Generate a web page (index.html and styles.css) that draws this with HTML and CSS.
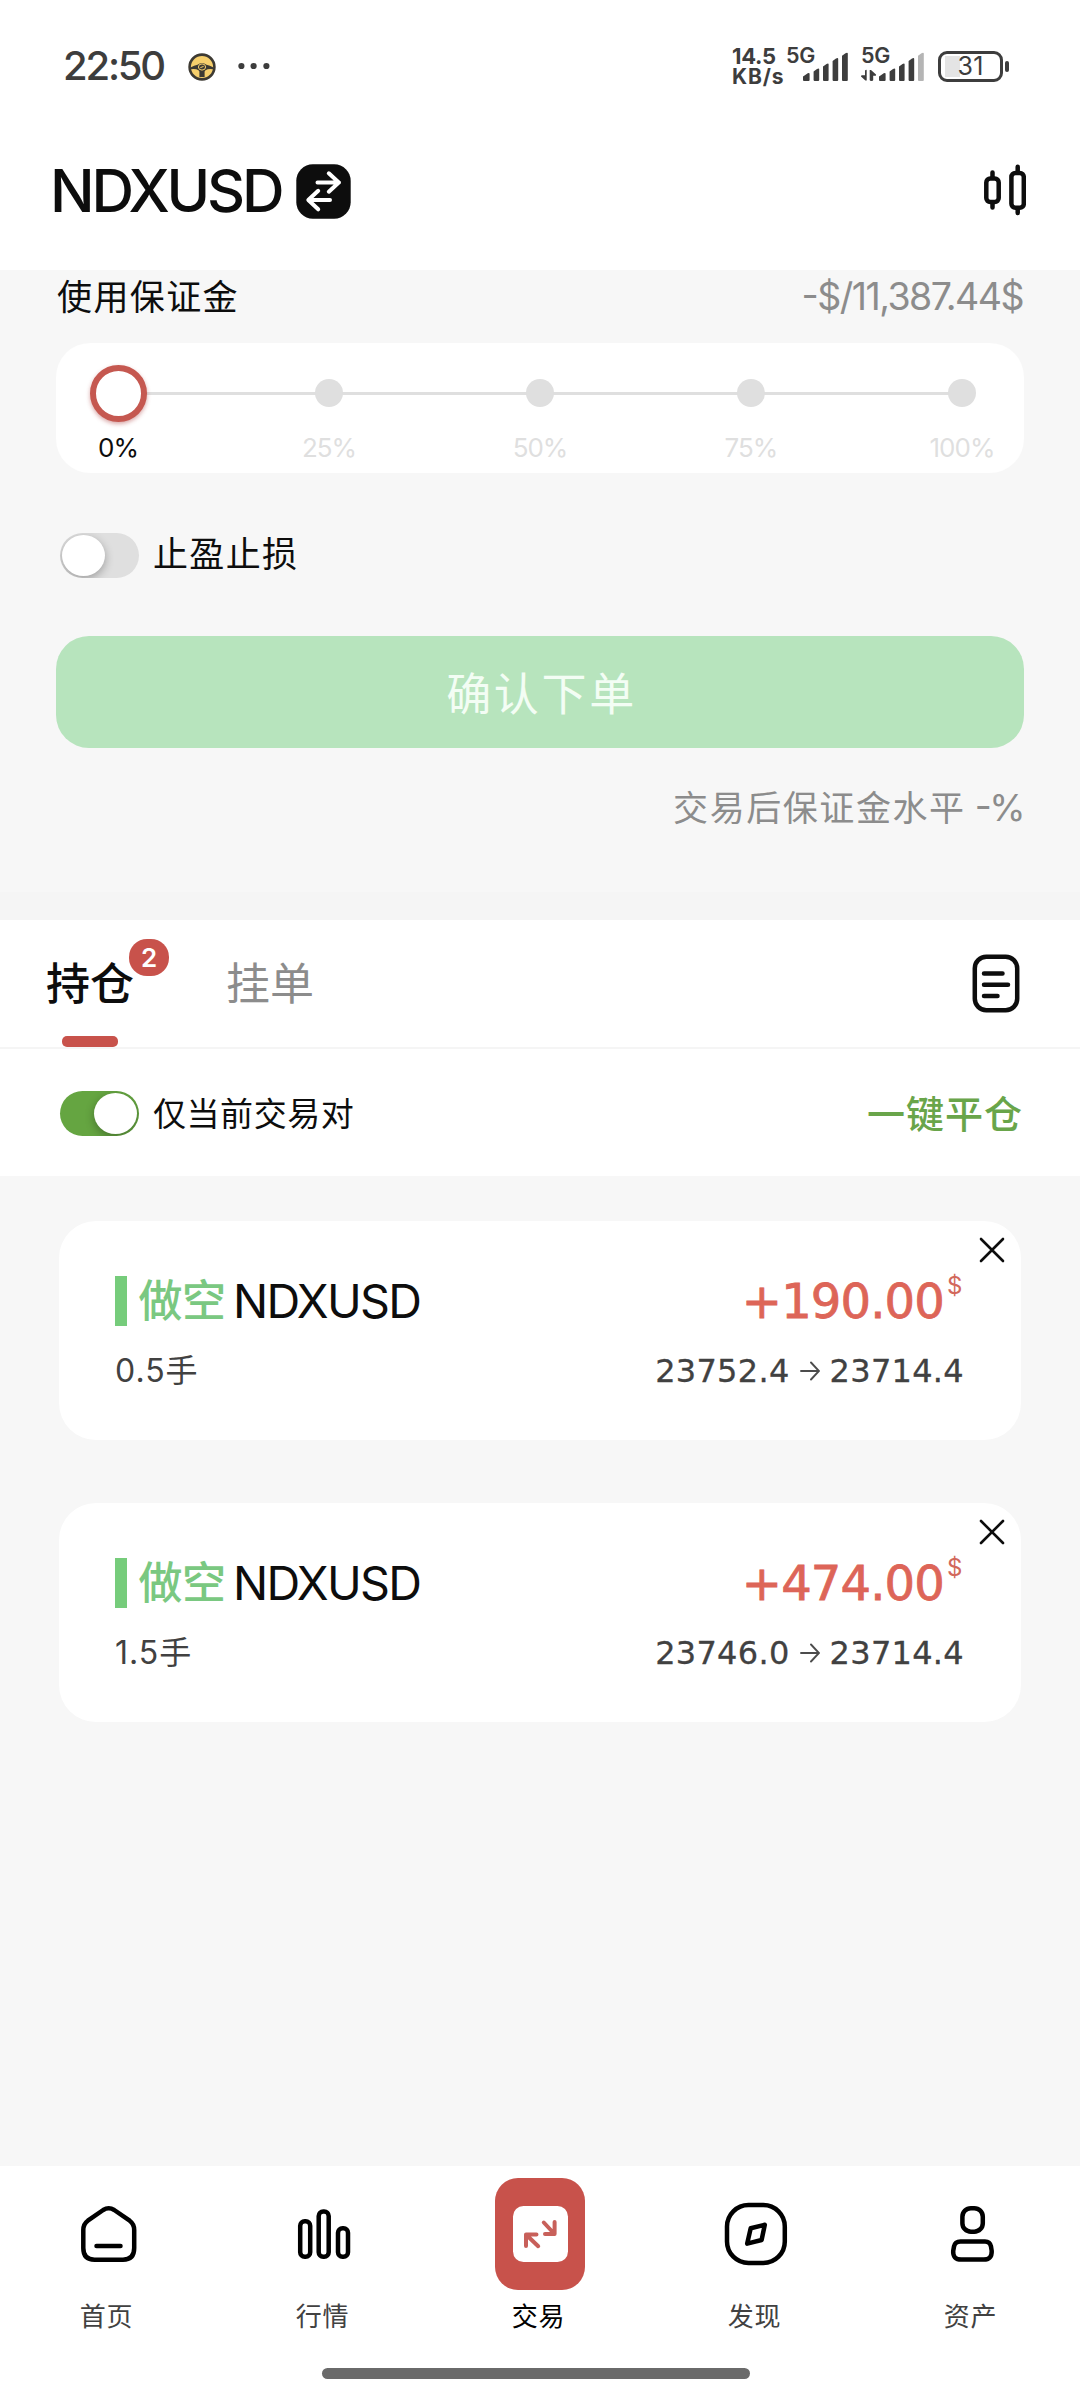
FILE: index.html
```
<!DOCTYPE html>
<html lang="zh-CN">
<head>
<meta charset="utf-8">
<title>NDXUSD 交易</title>
<link rel="stylesheet" href="styles.css">
</head>
<body>
<div class="screen">
  <div class="status">
    <span class="clock">22:50</span>
    <svg class="wheel" width="28" height="28" viewBox="0 0 28 28">
      <circle cx="14" cy="14" r="12.4" fill="#f6cf6c" stroke="#3d3a33" stroke-width="2.6"/>
      <path d="M3 14.2 Q6 12.6 9.5 11.8 Q14 8.2 18.5 11.8 Q22 12.6 25 14.2 V16.2 Q20 15.6 17.5 17.2 L16.6 18.5 V24 H11.4 V18.5 L10.5 17.2 Q8 15.6 3 16.2 Z" fill="#3d3a33"/>
      <ellipse cx="14" cy="14" rx="3.6" ry="3.1" fill="none" stroke="#f6cf6c" stroke-width="1"/>
      <path d="M12.4 14.6 L15.6 13.4" stroke="#f6cf6c" stroke-width="1"/>
    </svg>
    <svg class="dots" width="32" height="8" viewBox="0 0 32 8" fill="#3d3d3d"><circle cx="3.4" cy="4" r="3.1"/><circle cx="15.6" cy="4" r="3.1"/><circle cx="28.4" cy="4" r="3.1"/></svg>
    <div class="speed"><span class="speed-num">14.5</span><span class="speed-unit">KB/s</span></div>
    <div class="signal sim1">
      <span class="net">5G</span>
      <svg width="46" height="30" viewBox="0 0 46 30" fill="#3d3d3d">
        <path d="M0 29V25.5L3 23.5Q6.6 21 6.6 23V29Q6.6 30 5.6 30H1Q0 30 0 29Z"/>
        <path d="M10.6 29V20.5L14 18Q16.2 16.8 16.2 18.5V29Q16.2 30 15.2 30H11.6Q10.6 30 10.6 29Z"/>
        <path d="M20 29V15.5L23.5 13Q25.6 11.8 25.6 13.5V29Q25.6 30 24.6 30H21Q20 30 20 29Z"/>
        <path d="M29.6 29V10L33 7.5Q35.2 6.3 35.2 8V29Q35.2 30 34.2 30H30.6Q29.6 30 29.6 29Z"/>
        <path d="M39 29V4.8L42.5 2.3Q44.8 1.1 44.8 2.8V29Q44.8 30 43.8 30H40Q39 30 39 29Z"/>
      </svg>
    </div>
    <div class="signal sim2">
      <span class="net">5G</span>
      <svg width="64" height="30" viewBox="-18 0 64 30" fill="#3d3d3d">
        <path d="M-14 19.5Q-12.3 18-12.3 19.5V29.5H-13.6L-18 25.5Q-18.3 24.3-17 24.3H-14ZM-9.3 19H-8L-3 23.5Q-2.7 24.8-4 24.8H-5.8V29Q-5.8 30-7.5 30Q-9.3 30-9.3 29Z"/>
        <path d="M0 29V25.5L3 23.5Q6.6 21 6.6 23V29Q6.6 30 5.6 30H1Q0 30 0 29Z"/>
        <path d="M10.6 29V20.5L14 18Q16.2 16.8 16.2 18.5V29Q16.2 30 15.2 30H11.6Q10.6 30 10.6 29Z"/>
        <path d="M20 29V15.5L23.5 13Q25.6 11.8 25.6 13.5V29Q25.6 30 24.6 30H21Q20 30 20 29Z"/>
        <path d="M29.6 29V10L33 7.5Q35.2 6.3 35.2 8V29Q35.2 30 34.2 30H30.6Q29.6 30 29.6 29Z"/>
        <path fill="#b5b5b5" d="M39 29V4.8L42.5 2.3Q44.8 1.1 44.8 2.8V29Q44.8 30 43.8 30H40Q39 30 39 29Z"/>
      </svg>
    </div>
    <div class="battery"><span class="level">31</span></div>
    <span class="battery-cap"></span>
  </div>

  <header class="header">
    <h1 class="symbol">NDXUSD</h1>
    <svg class="swap" width="55" height="55" viewBox="0 0 55 55">
      <rect x="0.3" y="0.3" width="54.4" height="54.4" rx="16.5" fill="#0d0d0d"/>
      <path d="M21.5 18.5H43M32.8 9.3L42.8 18.5L32.8 27.7M34 36H12.5M22.2 26.8L12.3 36L22.2 45.3" fill="none" stroke="#fff" stroke-width="4" stroke-linecap="round" stroke-linejoin="round"/>
    </svg>
    <svg class="candles" width="42" height="52" viewBox="0 0 42 52" fill="none" stroke="#0d0d0d" stroke-width="4.5" stroke-linecap="round">
      <rect x="2.3" y="14.5" width="12.4" height="23.5" rx="4"/>
      <path d="M8.5 8.5V13M8.5 39.5V43.5M33.7 2.8V8M33.7 45V49"/>
      <rect x="27.4" y="9" width="12.4" height="34.8" rx="4"/>
    </svg>
  </header>

  <section class="order">
    <div class="margin-row">
      <span class="margin-label">使用保证金</span>
      <span class="margin-value">-$/11,387.44$</span>
    </div>
    <div class="slider">
      <div class="step active"><div class="mark"><i class="handle"></i></div><span>0%</span></div>
      <div class="step"><div class="mark"><i class="dot"></i></div><span>25%</span></div>
      <div class="step"><div class="mark"><i class="dot"></i></div><span>50%</span></div>
      <div class="step"><div class="mark"><i class="dot"></i></div><span>75%</span></div>
      <div class="step"><div class="mark"><i class="dot"></i></div><span>100%</span></div>
    </div>
    <div class="tpsl"><div class="toggle"><i class="knob"></i></div><span class="tpsl-label">止盈止损</span></div>
    <button class="confirm">确认下单</button>
    <div class="after"><span class="after-label">交易后保证金水平</span><span class="after-value">-%</span></div>
    <div class="order-foot"></div>
  </section>

  <section class="tabs">
    <div class="tab current">持仓<span class="badge">2</span></div>
    <div class="tab">挂单</div>
    <svg class="doc" width="48" height="59" viewBox="0 0 48 59" fill="none" stroke="#0d0d0d" stroke-width="4.5" stroke-linecap="round">
      <rect x="2.8" y="2.8" width="42.4" height="53.4" rx="11.5"/>
      <path d="M12 19.5H30.500M12 30.8H36M12 42H25.500"/>
    </svg>
  </section>

  <section class="filter">
    <div class="toggle on"><i class="knob"></i></div>
    <span class="filter-label">仅当前交易对</span>
    <span class="close-all">一键平仓</span>
  </section>

  <main class="positions">
    <article class="card">
      <div class="line main-line">
        <i class="bar"></i><span class="side">做空</span><span class="name">NDXUSD</span>
        <span class="pnl">+190.00</span><span class="unit">$</span>
      </div>
      <div class="line sub-line">
        <span class="lots">0.5手</span>
        <span class="price">23752.4</span>
        <svg class="arrow" width="20" height="20" viewBox="0 0 20 20" fill="none" stroke="#4c4c4c" stroke-width="1.9" stroke-linecap="round"><path d="M1 10H19M11 1.5L19 10L11 18.500"/></svg>
        <span class="price">23714.4</span>
      </div>
      <svg class="close" width="26" height="26" viewBox="0 0 26 26" stroke="#0d0d0d" stroke-width="2.6" stroke-linecap="round"><path d="M2 2L24 24M24 2L2 24"/></svg>
    </article>
    <article class="card">
      <div class="line main-line">
        <i class="bar"></i><span class="side">做空</span><span class="name">NDXUSD</span>
        <span class="pnl">+474.00</span><span class="unit">$</span>
      </div>
      <div class="line sub-line">
        <span class="lots">1.5手</span>
        <span class="price">23746.0</span>
        <svg class="arrow" width="20" height="20" viewBox="0 0 20 20" fill="none" stroke="#4c4c4c" stroke-width="1.9" stroke-linecap="round"><path d="M1 10H19M11 1.5L19 10L11 18.5"/></svg>
        <span class="price">23714.4</span>
      </div>
      <svg class="close" width="26" height="26" viewBox="0 0 26 26" stroke="#0d0d0d" stroke-width="2.6" stroke-linecap="round"><path d="M2 2L24 24M24 2L2 24"/></svg>
    </article>
  </main>

  <nav class="nav">
    <div class="items">
      <div class="item"><div class="icon"><svg width="72" height="72" viewBox="0 0 72 72">
        <path d="M31.2 12Q36.7 8.6 42.2 12L57.7 22.7Q62.2 26 62.2 32V50Q62.2 61.7 51 61.7H22.5Q11.3 61.7 11.3 50V32Q11.3 26 15.8 22.7Z"/><path d="M24.5 48H48.5"/></svg></div><span>首页</span></div>
      <div class="item"><div class="icon"><svg width="72" height="72" viewBox="0 0 72 72">
        <rect x="12.2" y="23.2" width="10" height="35.5" rx="4.5"/><rect x="30.7" y="13.5" width="10" height="45.2" rx="4.5"/><rect x="50" y="30.2" width="10" height="28.5" rx="4.5"/></svg></div><span>行情</span></div>
      <div class="item selected"><div class="icon"><svg width="90" height="112" viewBox="0 0 90 112">
        <rect class="tile" width="90" height="112" rx="23"/><rect class="plate" x="18" y="28" width="55" height="56" rx="10.5"/>
        <path class="arrows" d="M31 68V56.500H41.500M31.500 57L43.200 68.200M59.600 44V56H50M59 55.500L48.800 44.500"/></svg></div><span>交易</span></div>
      <div class="item"><div class="icon"><svg width="72" height="72" viewBox="0 0 72 72">
        <rect x="7" y="7.100" width="57.8" height="57.8" rx="21.5"/><path d="M30.7 30.3L44.8 26.8L41.6 42L27.2 45.6Z"/></svg></div><span>发现</span></div>
      <div class="item"><div class="icon"><svg width="72" height="72" viewBox="0 0 72 72">
        <rect x="26.4" y="10.2" width="20.4" height="23.5" rx="8.5"/><path d="M24.5 43.4H49Q54 43.4 55 48.5L55.7 53Q56 61.6 47.7 61.6H25.2Q16.7 61.6 17.2 53L18 48.5Q19 43.4 24.5 43.4Z"/></svg></div><span>资产</span></div>
    </div>
    <div class="home-bar"></div>
  </nav>
</div>
</body>
</html>
```
FILE: styles.css
```
* { box-sizing: border-box; }
body { margin: 0; font-family: Inter, "Noto Sans CJK SC", sans-serif; color: #0d0d0d; }
.screen { width: 1080px; height: 2400px; display: flex; flex-direction: column; background: #f7f7f7; overflow: hidden; }
svg { display: block; flex: none; }
span { white-space: nowrap; }

/* status bar */
.status { height: 132px; padding: 0 71px 0 63px; display: flex; align-items: center; background: #fff; color: #3d3d3d; }
.clock { width: 125px; font-size: 40px; font-weight: 500; letter-spacing: -2.2px; line-height: 40px; }
.wheel { margin-top: 1px; }
.dots { margin-left: 22px; }
.speed { margin-left: auto; width: 54px; display: flex; flex-direction: column; gap: 1px; font-weight: 700; font-size: 22px; line-height: 20px; }
.speed-num { letter-spacing: -.3px; }
.speed-unit { font-size: 21px; letter-spacing: .9px; }
.signal { display: flex; align-items: flex-start; height: 38px; }
.signal svg { margin-top: 4px; }
.net { font-size: 21.5px; font-weight: 600; line-height: 16px; letter-spacing: -.3px; }
.sim1 { width: 75px; }
.sim1 .net { width: 17px; }
.sim2 { width: 77px; }
.sim2 svg { margin-left: -28px; }
.sim2 .net { width: 28px; }
.battery { width: 65px; height: 31px; padding: 3px; display: flex; align-items: center; justify-content: center; border: 3px solid #3d3d3d; border-radius: 9px; background: linear-gradient(#e4e4e4, #e4e4e4) no-repeat 4px 2px / 15px 21px; }
.level { font-size: 25px; line-height: 25px; letter-spacing: .3px; }
.battery-cap { width: 4px; height: 11px; margin-left: 2px; border-radius: 2px; background: #3d3d3d; }

/* title */
.header { height: 138px; padding: 0 54px 20px 50px; display: flex; align-items: center; background: #fff; }
.symbol { margin: 0; width: 246px; font-size: 59px; font-weight: 500; letter-spacing: -3.2px; line-height: 60px; }
.candles { margin-left: auto; margin-bottom: 2px; }

/* order form */
.order { height: 650px; display: flex; flex-direction: column; }
.margin-row { height: 53px; padding: 0 57px; display: flex; align-items: center; justify-content: space-between; line-height: 40px; }
.margin-label { font-size: 35px; letter-spacing: 1.4px; }
.margin-value { font-size: 37.5px; letter-spacing: -1.52px; font-feature-settings: "case"; color: #8c8c8c; }
.slider { height: 130px; margin: 20px 56px 0; padding: 21px 30px 0; display: flex; justify-content: space-between; border-radius: 34px; background: linear-gradient(#dfdfdf, #dfdfdf) no-repeat 62px 49px / 844px 3px #fff; }
.step { width: 64px; display: flex; flex-direction: column; align-items: center; gap: 12px; color: #dfdfdf; font-size: 26px; line-height: 27px; letter-spacing: -1px; }
.active { color: #0d0d0d; }
.mark { height: 58px; display: flex; align-items: center; }
.dot { width: 28px; height: 28px; border-radius: 50%; background: #dfdfdf; }
.handle { width: 57px; height: 57px; border: 6px solid #c55850; border-radius: 50%; background: #fff; box-shadow: 0 2px 4px rgba(170, 60, 60, .45); }
.toggle { width: 79px; height: 45px; padding: 2px; display: flex; align-items: center; border-radius: 23px; background: #dfdfdf; overflow: hidden; flex: none; }
.knob { width: 43px; height: 41px; border-radius: 50%; background: #fff; box-shadow: 0 3px 10px rgba(0, 0, 0, .3); }
.on { justify-content: flex-end; background: #65a541; }
.tpsl { height: 45px; margin: 60px 60px 0; display: flex; align-items: center; gap: 14px; }
.tpsl-label { padding-bottom: 3px; font-size: 35px; letter-spacing: 1.33px; line-height: 42px; }
.confirm { height: 112px; margin: 58px 56px 0; padding: 5px 0 0 3px; border: 0; border-radius: 33px; background: #b7e4bd; color: #f3fdf4; font: 45px/60px Inter, "Noto Sans CJK SC", sans-serif; letter-spacing: 2.67px; }
.after { height: 40px; margin: 40px 57px 0; display: flex; align-items: center; justify-content: flex-end; color: #8c8c8c; line-height: 40px; }
.after-label { font-size: 35px; letter-spacing: 1.57px; }
.after-value { margin-left: 9px; font-size: 37px; letter-spacing: -2.5px; font-feature-settings: "case"; }
.order-foot { height: 28px; margin-top: auto; background: #f5f5f5; }

/* tabs */
.tabs { height: 129px; padding: 0 60px 0 46px; display: flex; align-items: center; background: #fff; border-bottom: 2px solid #f5f5f5; }
.tab { margin-right: 92px; font-size: 44px; line-height: 126px; color: #8c8c8c; position: relative; }
.current { color: #0d0d0d; font-weight: 500; }
.current::after { content: ""; position: absolute; left: 16px; bottom: 0; width: 56px; height: 11px; border-radius: 5px; background: #c8524b; }
.badge { position: absolute; left: 83px; top: 18px; width: 40px; height: 37px; border-radius: 18px; background: #c8524b; color: #fff; font-size: 26px; font-weight: 600; line-height: 37px; text-align: center; }
.doc { margin-left: auto; }

/* filter row */
.filter { height: 127px; padding: 1px 57px 0 60px; display: flex; align-items: center; background: #fff; }
.filter-label { margin-left: 14px; padding-top: 2px; font-size: 33px; letter-spacing: .55px; line-height: 40px; }
.close-all { margin-left: auto; padding-top: 2px; font-size: 38px; font-weight: 500; letter-spacing: 1px; line-height: 44px; color: #69a54a; }

/* positions */
.positions { flex: 1; padding: 45px 59px 0; display: flex; flex-direction: column; gap: 63px; }
.card { height: 219px; padding: 55px 57px 0 56px; border-radius: 37px; background: #fff; position: relative; }
.line { display: flex; align-items: center; }
.main-line { height: 50px; line-height: 50px; }
.bar { width: 12px; height: 50px; background: #76cc7b; }
.side { margin-left: 11.5px; font-size: 44px; font-weight: 500; letter-spacing: -.5px; color: #7ac881; }
.name { margin-left: 7.5px; font-size: 46.7px; letter-spacing: -1.7px; }
.pnl { margin-left: auto; font-family: "DejaVu Sans", sans-serif; font-size: 48px; letter-spacing: -.85px; color: #dd6558; -webkit-text-stroke: .8px #dd6558; }
.unit { width: 15px; margin: 0 2px 0 3px; align-self: flex-start; font-size: 24px; line-height: 20px; color: #d2685b; }
.sub-line { height: 40px; margin-top: 25px; color: #414141; line-height: 40px; }
.lots { margin-right: auto; font-size: 32px; letter-spacing: 1px; }
.price { font-family: "DejaVu Sans", sans-serif; font-size: 32px; letter-spacing: .3px; -webkit-text-stroke: .3px #414141; }
.arrow { margin: 0 10px; }
.close { position: absolute; top: 16px; right: 16px; }

/* bottom navigation */
.nav { height: 234px; padding-top: 12px; background: #fff; }
.items { display: flex; }
.item { width: 216px; display: flex; flex-direction: column; align-items: center; gap: 11px; font-size: 26px; line-height: 32px; color: #414141; }
.item span { margin-right: 3px; letter-spacing: .7px; }
.icon { height: 112px; display: flex; align-items: center; }
.icon svg { fill: none; stroke: #000; stroke-width: 4.5px; stroke-linecap: round; stroke-linejoin: round; }
.selected { color: #000; }
.icon .tile { fill: #c8524b; stroke: none; }
.icon .plate { fill: #fff; stroke: none; }
.icon .arrows { stroke: #c8605a; stroke-width: 4px; }
.home-bar { width: 428px; height: 11px; margin: 35px auto 0 322px; border-radius: 6px; background: #6a6a6a; }
```
